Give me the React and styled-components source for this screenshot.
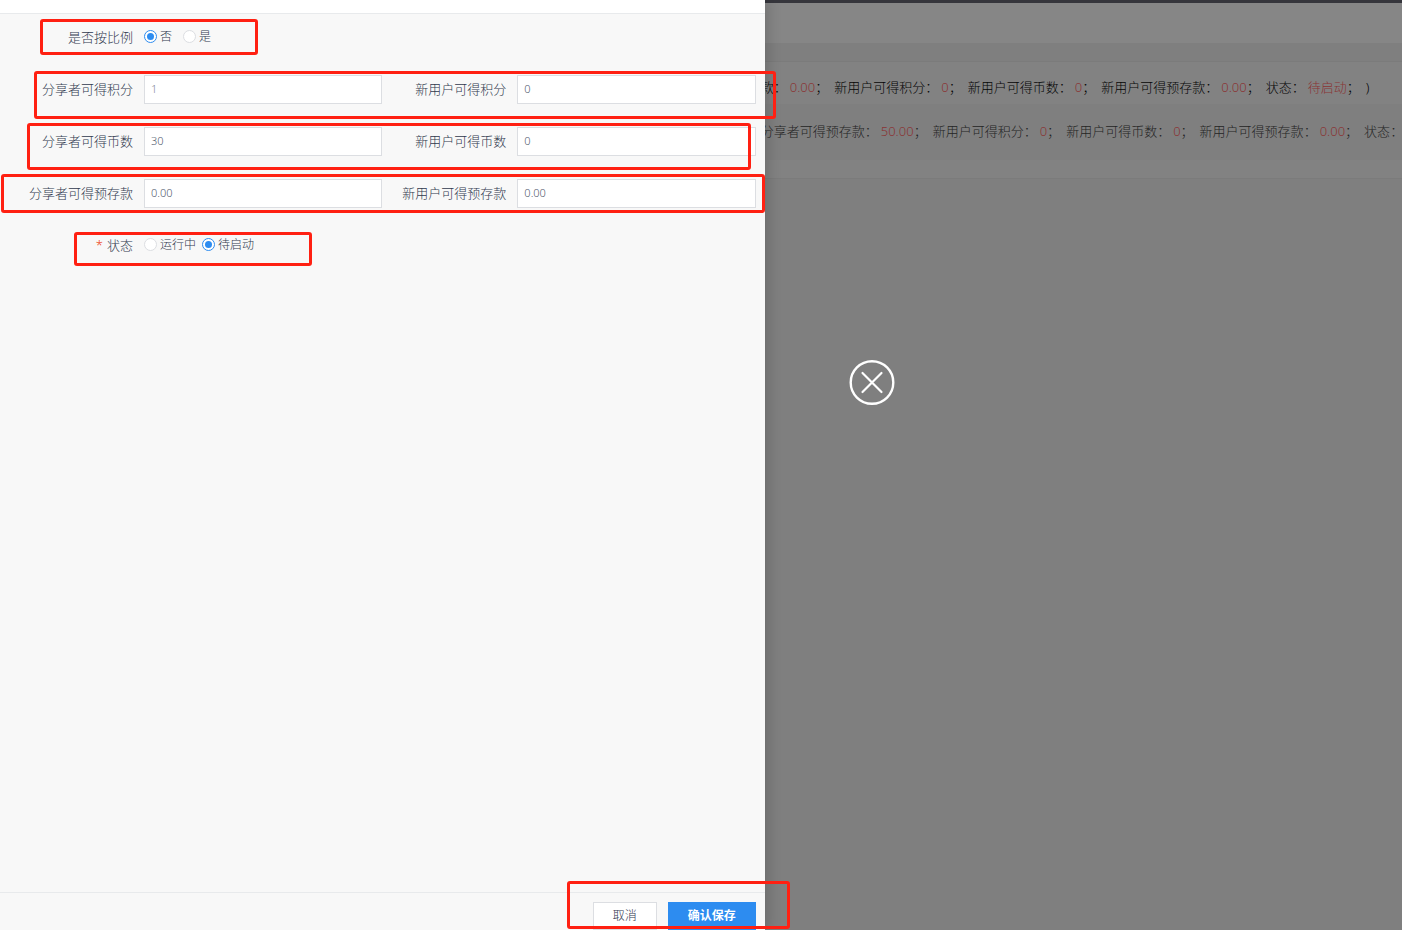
import React, { useState } from 'react'
import styled, { createGlobalStyle } from 'styled-components'

const GlobalStyle = createGlobalStyle`
  * {
    box-sizing: border-box;
  }

  body {
    margin: 0;
    overflow: hidden;
    font-family: 'Noto Sans', 'Noto Sans CJK SC', sans-serif;
    font-weight: 300;
    color: #30384e;
  }
`

const Page = styled.div`
  display: grid;
  grid-template-columns: 6fr 5fr;
  height: 100vh;
`

/* drawer */

const Drawer = styled.form`
  position: relative;
  z-index: 1;
  display: flex;
  flex-direction: column;
  background: #f8f8f8;
  box-shadow: 4px 0 12px rgba(0, 0, 0, 0.15);
`

const DrawerHeader = styled.header`
  height: 14px;
  background: #fff;
  border-bottom: 1px solid #e8eaec;
`

const DrawerBody = styled.div`
  flex: 1;
  display: flex;
  flex-direction: column;
  gap: 23px;
  padding: 9px 9px 0;
`

const FormRow = styled.div`
  position: relative;
  display: grid;
  grid-template-columns: 1fr 1fr;
  height: 29px;
`

const Field = styled.div`
  display: grid;
  grid-template-columns: 124px 1fr;
  column-gap: 11px;
  align-items: center;
`

const FieldLabel = styled.label`
  padding-bottom: 2px;
  font-size: 13px;
  line-height: 20px;
  text-align: right;
  white-space: nowrap;
`

const Required = styled.span`
  margin-right: 4px;
  color: #ed4014;
`

const TextInput = styled.input`
  width: 100%;
  height: 29px;
  padding: 0 6px 2px;
  border: 1px solid #dcdee2;
  border-radius: 0;
  background: #fff;
  color: ${(props) => (props.$muted ? '#868c9a' : '#515a6e')};
  font-family: inherit;
  font-weight: inherit;
  font-size: 11px;
  outline: none;
`

const RadioGroup = styled.div`
  display: flex;
  gap: ${(props) => props.$gap}px;
  padding-bottom: 1px;
`

const RadioLabel = styled.label`
  display: flex;
  align-items: center;
  gap: 3px;
  font-size: 12px;
  line-height: 18px;
  white-space: nowrap;
`

const Radio = styled.input`
  appearance: none;
  display: grid;
  place-items: center;
  width: 13px;
  height: 13px;
  margin: 0 0 2px;
  border: 1px solid #dcdee2;
  border-radius: 50%;
  background: #fff;

  &:checked {
    border-color: #2d8cf0;
  }

  &:checked::before {
    content: '';
    width: 7px;
    height: 7px;
    border-radius: 50%;
    background: #2d8cf0;
  }
`

const DrawerFooter = styled.footer`
  position: relative;
  display: flex;
  justify-content: flex-end;
  gap: 11px;
  padding: 9px 9px 0;
  border-top: 1px solid #e8eaec;
`

const Button = styled.button`
  height: 28px;
  padding: 0 19px 2px;
  border: 1px solid ${(props) => (props.$primary ? '#2d8cf0' : '#dcdee2')};
  background: ${(props) => (props.$primary ? '#2d8cf0' : '#fff')};
  color: ${(props) => (props.$primary ? '#fff' : '#30384e')};
  font-family: inherit;
  font-size: 12px;
  font-weight: ${(props) => (props.$primary ? 700 : 300)};
`

// red outline drawn over a group of controls
const Mark = styled.span`
  position: absolute;
  top: ${(props) => props.$top}px;
  bottom: ${(props) => props.$bottom}px;
  left: ${(props) => (props.$left === undefined ? 'auto' : props.$left + 'px')};
  right: ${(props) => (props.$right === undefined ? 'auto' : props.$right + 'px')};
  width: ${(props) => (props.$width ? props.$width + 'px' : 'auto')};
  border: 3px solid #ff2012;
  border-radius: 3px;
  pointer-events: none;
`

/* page under the mask */

const Behind = styled.main`
  position: relative;
  min-width: 0;
  background: #7f7f7f;
`

const TopBar = styled.div`
  height: 3px;
  background: #36363c;
`

const Toolbar = styled.div`
  height: 40px;
  background: #868686;
`

const Spacer = styled.div`
  height: 18px;
`

const RecordList = styled.section`
  height: 118px;
  border-top: 1px solid #7b7b7b;
  border-bottom: 1px solid #7b7b7b;
  background: #828282;
`

const Record = styled.p`
  display: flex;
  gap: 6px;
  height: ${(props) => (props.$striped ? 56 : 42)}px;
  margin: 0;
  padding-top: ${(props) => (props.$striped ? 17 : 15)}px;
  background: ${(props) => (props.$striped ? '#7f7f7f' : 'transparent')};
  color: ${(props) => (props.$striped ? '#242424' : '#050505')};
  font-size: 13px;
  line-height: 20px;
  white-space: nowrap;
`

// the first item of each record slides under the drawer edge
const RecordItem = styled.span`
  display: flex;

  &:first-child {
    margin-left: -4px;
  }
`

const Value = styled.span`
  margin-left: 3px;
  color: #8a3434;
`

const CloseButton = styled.button`
  position: absolute;
  top: 359px;
  left: 84px;
  width: 46px;
  height: 46px;
  padding: 0;
  border: none;
  background: none;
`

const records = [
  {
    striped: false,
    items: [
      ['款', '0.00'],
      ['新用户可得积分', '0'],
      ['新用户可得币数', '0'],
      ['新用户可得预存款', '0.00'],
      ['状态', '待启动'],
    ],
    end: ')',
  },
  {
    striped: true,
    items: [
      ['分享者可得预存款', '50.00'],
      ['新用户可得积分', '0'],
      ['新用户可得币数', '0'],
      ['新用户可得预存款', '0.00'],
      ['状态', ''],
    ],
  },
]

const amountRows = [
  {
    fields: [
      { id: 'sharePoints', label: '分享者可得积分', value: '1', muted: true },
      { id: 'newPoints', label: '新用户可得积分', value: '0' },
    ],
    mark: { $top: -4, $bottom: -15, $left: 25, $right: -20 },
  },
  {
    fields: [
      { id: 'shareCoins', label: '分享者可得币数', value: '30' },
      { id: 'newCoins', label: '新用户可得币数', value: '0' },
    ],
    mark: { $top: -4, $bottom: -14, $left: 18, $right: 5 },
  },
  {
    fields: [
      { id: 'shareDeposit', label: '分享者可得预存款', value: '0.00' },
      { id: 'newDeposit', label: '新用户可得预存款', value: '0.00' },
    ],
    mark: { $top: -5, $bottom: -5, $left: -8, $right: -9 },
  },
]

const RadioField = ({ name, label, options, initial, gap, required }) => {
  const [selected, setSelected] = useState(initial)
  return (
    <Field>
      <FieldLabel as="span" id={name}>
        {required && <Required>*</Required>}
        {label}
      </FieldLabel>
      <RadioGroup role="radiogroup" aria-labelledby={name} $gap={gap}>
        {options.map((option) => (
          <RadioLabel key={option}>
            <Radio
              type="radio"
              name={name}
              checked={selected === option}
              onChange={() => setSelected(option)}
            />
            {option}
          </RadioLabel>
        ))}
      </RadioGroup>
    </Field>
  )
}

const ShareForm = () => (
  <Drawer onSubmit={(e) => e.preventDefault()}>
    <DrawerHeader />
    <DrawerBody>
      <FormRow>
        <RadioField name="byRatio" label="是否按比例" options={['否', '是']} initial="否" gap={11} />
        <Mark $top={-4} $bottom={-3} $left={31} $width={218} />
      </FormRow>
      {amountRows.map((row) => (
        <FormRow key={row.fields[0].id}>
          {row.fields.map((field) => (
            <Field key={field.id}>
              <FieldLabel htmlFor={field.id}>{field.label}</FieldLabel>
              <TextInput id={field.id} type="text" defaultValue={field.value} $muted={field.muted} />
            </Field>
          ))}
          <Mark {...row.mark} />
        </FormRow>
      ))}
      <FormRow>
        <RadioField name="status" label="状态" options={['运行中', '待启动']} initial="待启动" gap={6} required />
        <Mark $top={1} $bottom={-6} $left={65} $width={238} />
      </FormRow>
    </DrawerBody>
    <DrawerFooter>
      <Button type="button">取消</Button>
      <Button type="submit" $primary>确认保存</Button>
      <Mark $top={-12} $bottom={1} $right={-25} $width={223} />
    </DrawerFooter>
  </Drawer>
)

const App = () => (
  <React.Fragment>
    <GlobalStyle />
    <Page lang="zh-CN">
      <ShareForm />
      <Behind>
        <TopBar />
        <Toolbar />
        <Spacer />
        <RecordList>
          {records.map((record) => (
            <Record key={record.items[0][0]} $striped={record.striped}>
              {record.items.map(([label, value]) => (
                <RecordItem key={label}>
                  {label}：{value && <Value>{value}</Value>}{value && '；'}
                </RecordItem>
              ))}
              {record.end}
            </Record>
          ))}
        </RecordList>
        <CloseButton type="button" aria-label="关闭">
          <svg width="46" height="46" viewBox="0 0 46 46" fill="none" stroke="#fff" strokeLinecap="round">
            <circle cx="23" cy="23.5" r="21.3" strokeWidth="2.4" />
            <path d="M13.5 14l19 19M32.5 14l-19 19" strokeWidth="2.2" />
          </svg>
        </CloseButton>
      </Behind>
    </Page>
  </React.Fragment>
)

export default App
